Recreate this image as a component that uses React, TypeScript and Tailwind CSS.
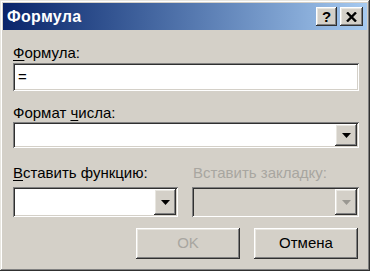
const sunken =
  'shadow-[inset_1px_1px_0_#808080,inset_-1px_-1px_0_#ffffff,inset_2px_2px_0_#303030,inset_-2px_-2px_0_#d4d0c8]'
const raised =
  'shadow-[inset_-1px_-1px_0_#303030,inset_1px_1px_0_#ffffff,inset_-2px_-2px_0_#808080,inset_2px_2px_0_#e8e6e0]'

const Arrow = ({ disabled }: { disabled?: boolean }) => (
  <svg width="9" height="5" viewBox="0 0 9 5">
    <path d="M0 0h9L4.5 5z" fill={disabled ? '#9a9892' : '#000'} />
  </svg>
)

const Combo = ({ disabled, className }: { disabled?: boolean; className: string }) => (
  <div className={`${className} ${sunken} ${disabled ? 'bg-[#d4d0c8]' : 'bg-white'} flex justify-end p-[2px]`}>
    <div className={`w-[22px] h-full bg-[#d4d0c8] ${raised} flex items-center justify-center`}>
      <Arrow disabled={disabled} />
    </div>
  </div>
)

const Button = ({ label, disabled }: { label: string; disabled?: boolean }) => (
  <div
    className={`w-[104px] h-[31px] bg-[#d4d0c8] ${raised} flex items-center justify-center text-[15px] ${
      disabled ? 'text-[#a8a6a0]' : 'text-black'
    }`}
  >
    {label}
  </div>
)

export default function App() {
  return (
    <div
      className="w-[370px] h-[271px] bg-[#d4d0c8] flex flex-col p-[3px] shadow-[inset_-1px_-1px_0_#303030,inset_1px_1px_0_#e8e6e0,inset_-2px_-2px_0_#808080,inset_2px_2px_0_#ffffff]"
      style={{ fontFamily: '"Liberation Sans", "DejaVu Sans", sans-serif' }}
    >
      <div className="h-[27px] shrink-0 flex items-center justify-between pl-[4px] pr-[4px] bg-gradient-to-r from-[#0a246a] to-[#a6caf0]">
        <span className="text-white font-bold text-[16px] tracking-[0.3px]">Формула</span>
        <div className="flex gap-[3px]">
          <div className={`w-[21px] h-[19px] bg-[#d4d0c8] ${raised} flex items-center justify-center font-bold text-[15px] leading-none`}>
            ?
          </div>
          <div className={`w-[23px] h-[19px] bg-[#d4d0c8] ${raised} flex items-center justify-center`}>
            <svg width="11" height="10" viewBox="0 0 11 10">
              <path d="M1 0.5L10 9.5M10 0.5L1 9.5" stroke="#000" strokeWidth="2.4" />
            </svg>
          </div>
        </div>
      </div>

      <div className="flex flex-col pl-[10px] pr-[8px] text-[15px] text-black">
        <div className="mt-[14px] h-[18px] leading-[18px]">
          <span className="underline underline-offset-2">Ф</span>ормула:
        </div>
        <div className={`mt-[1px] h-[28px] bg-white ${sunken} flex items-center pl-[5px] text-[15px]`}>=</div>

        <div className="mt-[13px] h-[18px] leading-[18px]">
          Формат <span className="underline underline-offset-2">ч</span>исла:
        </div>
        <Combo className="h-[26px] w-full" />

        <div className="mt-[16px] flex h-[18px] leading-[18px]">
          <div className="w-[180px]">
            <span className="underline underline-offset-2">В</span>ставить функцию:
          </div>
          <div className="text-[#a8a6a0]">Вставить закладку:</div>
        </div>
        <div className="mt-[5px] flex">
          <Combo className="w-[165px] h-[30px]" />
          <Combo disabled className="ml-[14px] w-[167px] h-[30px]" />
        </div>

        <div className="mt-[11px] flex justify-end gap-[14px] pr-[1px]">
          <Button label="OK" disabled />
          <Button label="Отмена" />
        </div>
      </div>
    </div>
  )
}
